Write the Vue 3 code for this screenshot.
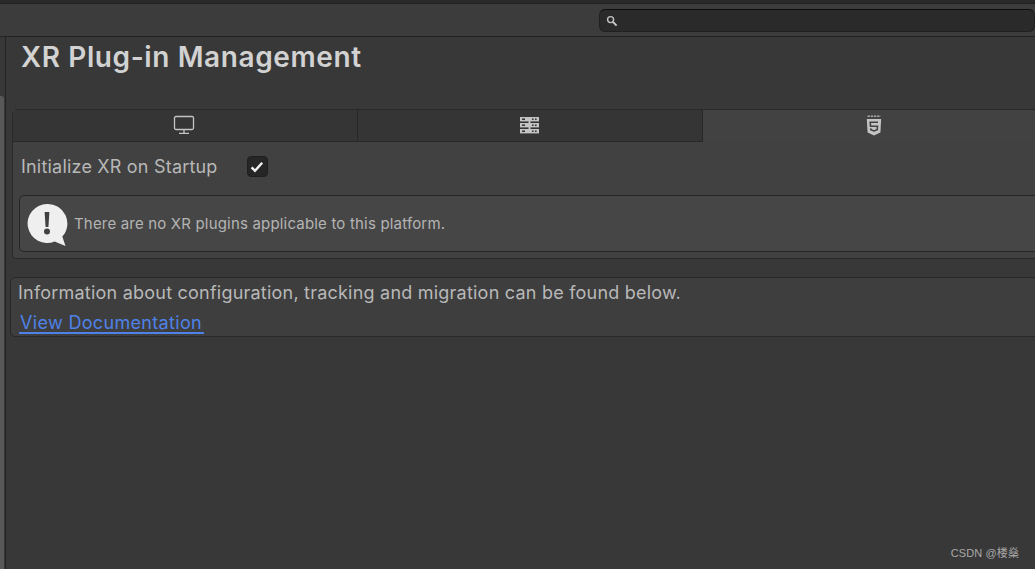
<template>
  <div class="window">
    <div class="top-strip"></div>
    <header class="toolbar">
      <div class="search">
        <svg class="search-icon" width="12" height="12" viewBox="0 0 12 12">
          <circle cx="4.6" cy="4.6" r="3" fill="none" stroke="#c4c4c4" stroke-width="1.4" />
          <path d="M7 7l3.6 3.6" stroke="#c4c4c4" stroke-width="2" />
        </svg>
      </div>
    </header>

    <div class="body">
      <aside class="side"><div class="side-thumb"></div></aside>

      <main class="content">
        <h1>XR Plug-in Management</h1>

        <section class="settings">
          <div class="tabs">
            <button v-for="tab in tabs" :key="tab.id" class="tab" :class="{ active: tab.id === activeTab }">
              <svg v-if="tab.id === 'desktop'" width="22" height="20" viewBox="0 0 22 20">
                <rect x="1.5" y="1.5" width="19" height="13" rx="1.5" fill="none" stroke="#c4c4c4" stroke-width="1.3" />
                <path d="M11 15v3M6 18.3h10" stroke="#c4c4c4" stroke-width="1.3" fill="none" />
              </svg>
              <svg v-else-if="tab.id === 'server'" width="20" height="20" viewBox="0 0 20 20">
                <g fill="#c4c4c4">
                  <rect x="0" y="2" width="19" height="4.4" />
                  <rect x="0" y="8" width="19" height="4.4" />
                  <rect x="0" y="14" width="19" height="4.4" />
                  <rect x="8.5" y="6" width="2" height="2" />
                  <rect x="8.5" y="12" width="2" height="2" />
                </g>
                <g fill="#3a3a3a">
                  <rect x="2" y="3.4" width="3" height="1.6" />
                  <rect x="12" y="3.4" width="1.6" height="1.6" />
                  <rect x="15" y="3.4" width="1.6" height="1.6" />
                  <rect x="2" y="9.4" width="3" height="1.6" />
                  <rect x="12" y="9.4" width="1.6" height="1.6" />
                  <rect x="15" y="9.4" width="1.6" height="1.6" />
                  <rect x="2" y="15.4" width="3" height="1.6" />
                  <rect x="12" y="15.4" width="1.6" height="1.6" />
                  <rect x="15" y="15.4" width="1.6" height="1.6" />
                </g>
              </svg>
              <svg v-else width="16" height="22" viewBox="0 0 16 22">
                <path d="M1.5 1.2h13" stroke="#a8a8a8" stroke-width="1.4" stroke-dasharray="2.4 .8" />
                <path d="M.8 4h14.4l-.8 13.6L8 20.4l-6.4-2.8z" fill="#c4c4c4" />
                <path d="M12 7.2H4.2l.3 4h7l-.3 3.6L8 16l-3.2-1.2-.1-1.4" fill="none" stroke="#424242" stroke-width="1.6" />
              </svg>
            </button>
          </div>

          <div class="tab-body">
            <label class="field">
              <span>Initialize XR on Startup</span>
              <span class="checkbox">
                <svg width="14" height="12" viewBox="0 0 14 12">
                  <path d="M1.6 6.4l3.4 3.4 7.2-8" fill="none" stroke="#f0f0f0" stroke-width="2.4" />
                </svg>
              </span>
            </label>

            <div class="help-box">
              <svg class="help-icon" width="41" height="44" viewBox="0 0 41 44">
                <path d="M20 1a19.5 19.5 0 1 0 7.6 37.5L38.5 43l-3.2-9.4A19.5 19.5 0 0 0 20 1z" fill="#efefef" />
                <path d="M17.6 9h4.8l-1 15h-2.8z" fill="#414141" />
                <circle cx="20" cy="28.6" r="3" fill="#414141" />
              </svg>
              <p>There are no XR plugins applicable to this platform.</p>
            </div>
          </div>
        </section>

        <section class="info">
          <p>Information about configuration, tracking and migration can be found below.</p>
          <a href="#" class="doc-link">View Documentation</a>
        </section>
      </main>
    </div>

    <span class="watermark">CSDN @楼燊</span>
  </div>
</template>

<script setup>
import { ref } from 'vue'

const tabs = [{ id: 'desktop' }, { id: 'server' }, { id: 'webgl' }]
const activeTab = ref('webgl')
</script>

<style>
html,
body {
  margin: 0;
  overflow: hidden;
  background: #383838;
}
</style>

<style scoped>
.window {
  position: relative;
  width: 1035px;
  height: 569px;
  overflow: hidden;
  display: flex;
  flex-direction: column;
  background: #383838;
  font-family: Inter, 'Noto Sans', sans-serif;
  color: #c4c4c4;
}

.top-strip {
  height: 3px;
  background: #2a2a2a;
  border-bottom: 1px solid #212121;
  flex: none;
}

.toolbar {
  height: 32px;
  flex: none;
  background: #3c3c3c;
  border-bottom: 1px solid #232323;
  display: flex;
  align-items: flex-start;
  padding-left: 599px;
}

.search {
  margin-top: 5px;
  width: 460px;
  height: 23px;
  box-sizing: border-box;
  background: #2a2a2a;
  border: 1px solid #212121;
  border-top-color: #0e0e0e;
  border-radius: 6px;
  display: flex;
  align-items: center;
  padding-left: 6px;
}

.body {
  flex: 1;
  display: flex;
  min-height: 0;
}

.side {
  width: 5px;
  flex: none;
  border-right: 1px solid #232323;
  padding-top: 59px;
  background: #383838;
}

.side-thumb {
  width: 4px;
  height: 100%;
  background: #585858;
  border-top-right-radius: 3px;
}

.content {
  flex: 1;
  min-width: 0;
}

h1 {
  margin: 0;
  padding: 2px 0 0 15px;
  height: 72px;
  box-sizing: border-box;
  font-size: 28px;
  line-height: 36px;
  letter-spacing: 0.6px;
  font-weight: 600;
  color: #d2d2d2;
}

.settings {
  margin-left: 6px;
  width: 1100px;
  height: 150px;
  box-sizing: border-box;
  border: 1px solid #2a2a2a;
  border-radius: 4px 0 0 4px;
}

.tabs {
  display: grid;
  grid-template-columns: 345px 345px 342px;
  height: 32px;
  background: #424242;
}

.tab {
  padding: 0 0 2px;
  border: 0;
  border-right: 1px solid #282828;
  border-bottom: 1px solid #282828;
  background: #353535;
  display: flex;
  align-items: center;
  justify-content: center;
}

.tab:first-child {
  border-top-left-radius: 4px;
  padding-right: 2px;
}

.tab.active {
  padding-bottom: 0;
  background: #424242;
  border-right: 0;
  border-bottom: 0;
}

.tab-body {
  background: #414141;
  height: 116px;
  padding: 0 0 0 6px;
  border-radius: 0 0 0 4px;
}

.field {
  height: 53px;
  box-sizing: border-box;
  padding: 0 0 4px 2px;
  display: flex;
  align-items: center;
  gap: 29px;
  font-size: 18px;
  letter-spacing: 0.2px;
  color: #b8b8b8;
}

.checkbox {
  width: 21px;
  height: 21px;
  border-radius: 4px;
  background: #262626;
  border: 1px solid #1f1f1f;
  box-sizing: border-box;
  display: flex;
  align-items: center;
  justify-content: center;
}

.help-box {
  height: 57px;
  box-sizing: border-box;
  border: 1px solid #252525;
  border-radius: 5px;
  background: #464646;
  display: flex;
  align-items: center;
  gap: 6px;
  padding-left: 7px;
}

.help-icon {
  flex: none;
  margin-top: 2px;
}

.help-box p {
  margin: 0;
  font-size: 15px;
  letter-spacing: 0.18px;
  color: #b4b4b4;
}

.info {
  margin-top: 18px;
  margin-left: 4px;
  width: 1100px;
  height: 60px;
  box-sizing: border-box;
  border: 1px solid #282828;
  border-radius: 5px 0 0 5px;
  background: #3e3e3e;
  padding: 4px 0 0 7px;
  font-size: 18px;
  letter-spacing: 0.22px;
  color: #b8b8b8;
}

.info p {
  margin: 0 0 8px;
  line-height: 22px;
}

.doc-link {
  display: block;
  width: fit-content;
  margin-left: 1px;
  padding: 0 2px 0 1px;
  height: 20px;
  line-height: 22px;
  letter-spacing: 0.33px;
  color: #4f82e8;
  text-decoration: none;
  border-bottom: 2px solid #4f82e8;
}

.watermark {
  position: absolute;
  right: 16px;
  bottom: 9px;
  font-family: 'Liberation Sans', 'Noto Sans CJK SC', sans-serif;
  font-size: 11px;
  letter-spacing: 0.1px;
  color: #a8a8a8;
}
</style>
